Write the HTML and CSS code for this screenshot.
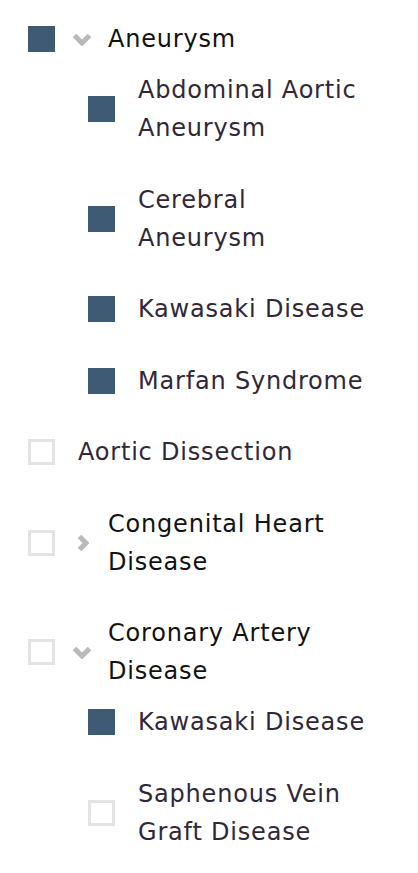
FILE: index.html
```html
<!DOCTYPE html>
<html>
<head>
<meta charset="utf-8">
<link rel="stylesheet" href="styles.css">
</head>
<body>
<ul class="tree">
  <li class="node">
    <div class="row parent">
      <span class="box checked"></span>
      <svg class="chev" viewBox="0 0 20 13"><path d="M2.5 2.5 L10 10 L17.5 2.5" /></svg>
      <span class="label">Aneurysm</span>
    </div>
    <ul class="children">
      <li class="node"><div class="row leaf"><span class="box checked"></span><span class="label">Abdominal Aortic Aneurysm</span></div></li>
      <li class="node"><div class="row leaf"><span class="box checked"></span><span class="label">Cerebral Aneurysm</span></div></li>
      <li class="node"><div class="row leaf"><span class="box checked"></span><span class="label">Kawasaki Disease</span></div></li>
      <li class="node"><div class="row leaf"><span class="box checked"></span><span class="label">Marfan Syndrome</span></div></li>
    </ul>
  </li>
  <li class="node">
    <div class="row leaf"><span class="box"></span><span class="label">Aortic Dissection</span></div>
  </li>
  <li class="node">
    <div class="row parent">
      <span class="box"></span>
      <svg class="chev right" viewBox="0 0 12 18"><path d="M2.5 2.5 L9 9 L2.5 15.5" /></svg>
      <span class="label">Congenital Heart Disease</span>
    </div>
  </li>
  <li class="node">
    <div class="row parent">
      <span class="box"></span>
      <svg class="chev" viewBox="0 0 20 13"><path d="M2.5 2.5 L10 10 L17.5 2.5" /></svg>
      <span class="label">Coronary Artery Disease</span>
    </div>
    <ul class="children">
      <li class="node"><div class="row leaf"><span class="box checked"></span><span class="label">Kawasaki Disease</span></div></li>
      <li class="node"><div class="row leaf"><span class="box"></span><span class="label">Saphenous Vein Graft Disease</span></div></li>
    </ul>
  </li>
</ul>
</body>
</html>
```

FILE: styles.css
```css
html, body {
  margin: 0;
  padding: 0;
  background: #ffffff;
}

.tree {
  list-style: none;
  margin: 0;
  padding: 20px 0 0 28px;
  width: 348px;
  display: flex;
  flex-direction: column;
  gap: 33.5px;
  font-family: "DejaVu Sans", "Open Sans", sans-serif;
  font-size: 24px;
  letter-spacing: 0.8px;
  line-height: 38px;
}

.children {
  list-style: none;
  margin: 13px 0 0 0;
  padding: 0 0 0 60px;
  display: flex;
  flex-direction: column;
  gap: 33.5px;
}

.row {
  display: flex;
  align-items: center;
}

.box {
  flex: none;
  width: 27px;
  height: 26px;
  box-sizing: border-box;
  border: 3px solid #e4e4e4;
  background: #ffffff;
}

.box.checked {
  border-color: #3f5b73;
  background: #3f5b73;
}

.chev {
  flex: none;
  width: 20px;
  height: 13px;
  margin: 0 16px 0 17px;
  fill: none;
  stroke: #b9b9b9;
  stroke-width: 5;
  stroke-linecap: butt;
  stroke-linejoin: miter;
}

.chev.right {
  width: 12px;
  height: 18px;
  margin: 0 19px 0 22px;
}

.leaf .label {
  margin-left: 23px;
  color: #302838;
}

.parent .label {
  color: #121212;
}
```
